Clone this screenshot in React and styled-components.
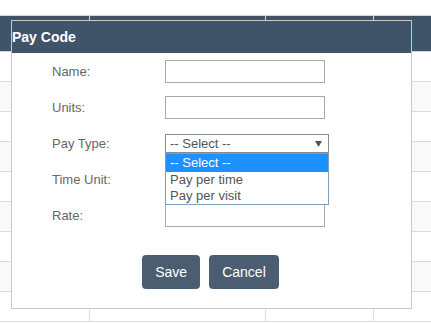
import styled, { createGlobalStyle } from "styled-components";

const GlobalStyle = createGlobalStyle`
    body {
        margin: 0;
        background: #fff;
        font-family: "Liberation Sans", Arial, sans-serif;
    }
`;

const columns = [90, 176, 108, 57];
const rows = 9;

function PayCodeDialog() {
    return (
        <Page>
            <GlobalStyle />
            <Table>
                <HeadRow>
                    {columns.map((w, i) => <HeadCell key={i} style={{ width: w }} />)}
                </HeadRow>
                {Array.from({ length: rows }).map((_, r) => (
                    <BodyRow key={r} $odd={r % 2 === 1}>
                        {columns.map((w, i) => (
                            <BodyCell key={i} style={{ width: w }}>
                                {r === rows - 2 && i === 1 && <Mark>.</Mark>}
                                {r === rows - 2 && i === 2 && <Dash />}
                                {r === rows - 2 && i === 3 && <Icons />}
                            </BodyCell>
                        ))}
                    </BodyRow>
                ))}
            </Table>

            <Modal>
                <ModalHeader>Pay Code</ModalHeader>
                <Form>
                    <Label>Name:</Label>
                    <Field><TextInput /></Field>
                    <Label>Units:</Label>
                    <Field><TextInput /></Field>
                    <Label>Pay Type:</Label>
                    <Field>
                        <SelectBox>
                            <span>-- Select --</span>
                            <svg width="7" height="6" viewBox="0 0 7 6">
                                <path d="M0 0H7L3.5 6Z" fill="#555" />
                            </svg>
                        </SelectBox>
                        <OptionList>
                            <Option $active>-- Select --</Option>
                            <Option>Pay per time</Option>
                            <Option>Pay per visit</Option>
                        </OptionList>
                    </Field>
                    <Label>Time Unit:</Label>
                    <Field><TextInput /></Field>
                    <Label>Rate:</Label>
                    <Field><TextInput /></Field>
                </Form>
                <Actions>
                    <Button>Save</Button>
                    <Button>Cancel</Button>
                </Actions>
            </Modal>
        </Page>
    );
}

const Page = styled.div`
    position: relative;
    width: 431px;
    height: 324px;
    overflow: hidden;
    padding-top: 15px;
    box-sizing: border-box;
`;

const Table = styled.div`
    display: flex;
    flex-direction: column;
    width: 431px;
`;

const HeadRow = styled.div`
    display: flex;
    height: 37px;
    background: #3f5468;
    border-top: 1px solid #d6d6d6;
    border-bottom: 1px solid #d6d6d6;
    box-sizing: border-box;
`;

const HeadCell = styled.div`
    border-right: 1px solid #d6d6d6;
    box-sizing: border-box;
    &:last-child { border-right: none; flex: 1; }
`;

const BodyRow = styled.div`
    display: flex;
    height: 30px;
    background: ${p => (p.$odd ? "#f9f9f9" : "#fff")};
    border-bottom: 1px solid #dcdcdc;
    box-sizing: border-box;
`;

const BodyCell = styled.div`
    position: relative;
    border-right: 1px solid #dcdcdc;
    box-sizing: border-box;
    &:last-child { border-right: none; flex: 1; }
`;

const Mark = styled.span`
    position: absolute;
    left: 7px;
    top: 10px;
    font-size: 13px;
    color: #555;
`;

const Dash = styled.span`
    position: absolute;
    left: 12px;
    top: 18px;
    width: 9px;
    height: 1px;
    background: #666;
`;

const Icons = styled.span`
    position: absolute;
    left: 13px;
    top: 18px;
    width: 11px;
    height: 2px;
    background: linear-gradient(90deg, #8aa4c8 0 40%, transparent 40% 55%, #8aa4c8 55%);
`;

const Modal = styled.div`
    position: absolute;
    left: 11px;
    top: 20px;
    width: 401px;
    height: 289px;
    background: #fff;
    border: 1px solid #c8c8c8;
    box-sizing: border-box;
    display: flex;
    flex-direction: column;
`;

const ModalHeader = styled.div`
    height: 32px;
    background: #3f5468;
    color: #fff;
    font-weight: bold;
    font-size: 14px;
    line-height: 32px;
`;

const Form = styled.div`
    display: grid;
    grid-template-columns: 113px 164px;
    grid-auto-rows: 23px;
    row-gap: 13px;
    padding: 7px 0 0 40px;
`;

const Label = styled.div`
    font-size: 13px;
    color: #666;
    line-height: 23px;
`;

const Field = styled.div`
    position: relative;
    display: flex;
    align-items: center;
`;

const TextInput = styled.div`
    width: 160px;
    height: 23px;
    border: 1px solid #a9a9a9;
    box-sizing: border-box;
    background: #fff;
`;

const SelectBox = styled.div`
    width: 164px;
    height: 19px;
    border: 1px solid #8a8a8a;
    box-sizing: border-box;
    display: flex;
    align-items: center;
    justify-content: space-between;
    padding: 0 6px 0 4px;
    font-size: 13px;
    color: #555;
    background: #fff;
`;

const OptionList = styled.div`
    position: absolute;
    left: 0;
    top: 21px;
    width: 164px;
    border: 1px solid #7f9db9;
    box-sizing: border-box;
    background: #fff;
    z-index: 2;
`;

const Option = styled.div`
    height: ${p => (p.$active ? "18px" : "16px")};
    line-height: ${p => (p.$active ? "18px" : "16px")};
    padding-left: 4px;
    font-size: 13px;
    color: ${p => (p.$active ? "#fff" : "#555")};
    background: ${p => (p.$active ? "#1e90ff" : "#fff")};
`;

const Actions = styled.div`
    display: flex;
    justify-content: center;
    gap: 9px;
    margin-top: 28px;
    padding-right: 2px;
`;

const Button = styled.button`
    height: 34px;
    padding: 0 13px;
    border: none;
    border-radius: 4px;
    background: #4b5e71;
    color: #fff;
    font-family: "Liberation Sans", Arial, sans-serif;
    font-size: 14px;
`;

export default PayCodeDialog;
